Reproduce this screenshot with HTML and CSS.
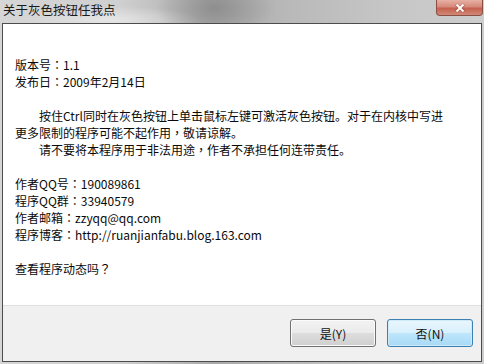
FILE: index.html
```
<html>
    <head>
        <title>关于灰色按钮任我点</title>
        <link rel="stylesheet" href="styles.css">
    </head>
    <body>
        <div class="window">
            <div class="titlebar">
                <span class="title">关于灰色按钮任我点</span>
                <div class="close-btn">
                    <svg width="12" height="10" viewBox="0 0 12 10">
                        <path d="M2 1.5 L10 8.5 M10 1.5 L2 8.5" stroke="#6b2a20" stroke-width="3" stroke-opacity="0.35"/>
                        <path d="M2.5 1.5 L9.5 8.5 M9.5 1.5 L2.5 8.5" stroke="#ffffff" stroke-width="1.8"/>
                    </svg>
                </div>
            </div>
            <div class="client">
                <div class="message">
                    <div>版本号<span class="punct">：</span>1.1</div>
                    <div>发布日<span class="punct">：</span>2009年2月14日</div>
                    <div class="blank"></div>
                    <div><span class="indent"></span>按住Ctrl同时在灰色按钮上单击鼠标左键可激活灰色按钮。对于在内核中写进<br>更多限制的程序可能不起作用<span class="punct">，</span>敬请谅解。</div>
                    <div><span class="indent"></span>请不要将本程序用于非法用途<span class="punct">，</span>作者不承担任何连带责任。</div>
                    <div class="blank"></div>
                    <div>作者QQ号<span class="punct">：</span>190089861</div>
                    <div>程序QQ群<span class="punct">：</span>33940579</div>
                    <div>作者邮箱<span class="punct">：</span>zzyqq@qq.com</div>
                    <div>程序博客<span class="punct">：</span>http://ruanjianfabu.blog.163.com</div>
                    <div class="blank"></div>
                    <div>查看程序动态吗<span class="punct">？</span></div>
                </div>
                <div class="footer">
                    <button class="button">是(Y)</button>
                    <button class="button default">否(N)</button>
                </div>
            </div>
        </div>
    </body>
</html>
```
FILE: styles.css
```
* {
    margin: 0;
    box-sizing: border-box;
}

body {
    padding: 0;
    width: 484px;
    height: 364px;
    overflow: hidden;
    font-family: "Noto Sans CJK SC", sans-serif;
    font-size: 12px;
    color: #0a0a0a;
}

.window {
    width: 484px;
    height: 364px;
    padding: 0 2px 2px 2px;
    display: flex;
    flex-direction: column;
    background:
        radial-gradient(ellipse 60px 30px at 215px 8px, rgba(120,120,120,0.55), rgba(120,120,120,0) 100%),
        radial-gradient(ellipse 90px 14px at 110px 20px, rgba(235,235,235,0.8), rgba(235,235,235,0) 100%),
        linear-gradient(to right, #d6d6d6 0%, #cfcfcf 25%, #a9a9a9 44%, #b9b9b9 60%, #c6c6c6 80%, #cdcdcd 100%);
}

.titlebar {
    height: 23px;
    display: flex;
    justify-content: space-between;
    align-items: flex-start;
}

.title {
    padding: 1px 0 0 1px;
    line-height: 17px;
    font-size: 12.5px;
    color: #1a1a1a;
}

.close-btn {
    width: 47px;
    height: 16px;
    margin-right: -1px;
    border: 1px solid #8a4e44;
    border-top: none;
    border-radius: 0 0 4px 4px;
    background: linear-gradient(to bottom, #e7b1a5 0%, #d6897a 45%, #c5604d 55%, #d18a78 100%);
    display: flex;
    justify-content: center;
    align-items: center;
}

.client {
    flex: 1;
    border: 1px solid #4c4c4c;
    background-color: white;
    display: flex;
    flex-direction: column;
}

.message {
    flex: 1;
    padding: 32px 0 0 12px;
    line-height: 17px;
}

.punct {
    font-family: "Noto Sans CJK TC", sans-serif;
}

.blank {
    height: 17px;
}

.indent {
    display: inline-block;
    width: 24px;
}

.footer {
    height: 56px;
    border-top: 1px solid #dfdfdf;
    background-color: #f0f0f0;
    display: flex;
    justify-content: flex-end;
    gap: 11px;
    padding: 13px 8px 0 0;
}

.button {
    width: 86px;
    height: 28px;
    border: 1px solid #707070;
    border-radius: 3px;
    font-family: "Noto Sans CJK SC", sans-serif;
    font-size: 12px;
    color: #111;
    background: linear-gradient(to bottom, #f2f2f2 0%, #ebebeb 48%, #dddddd 52%, #cfcfcf 100%);
    box-shadow: inset 0 0 0 1px #fbfbfb;
}

.default {
    border-color: #3c7fb1;
    background: linear-gradient(to bottom, #eaf6fd 0%, #d9f0fc 48%, #bee6fd 52%, #a7d9f5 100%);
    box-shadow: inset 0 0 0 1px #cfeaf9;
}
```
